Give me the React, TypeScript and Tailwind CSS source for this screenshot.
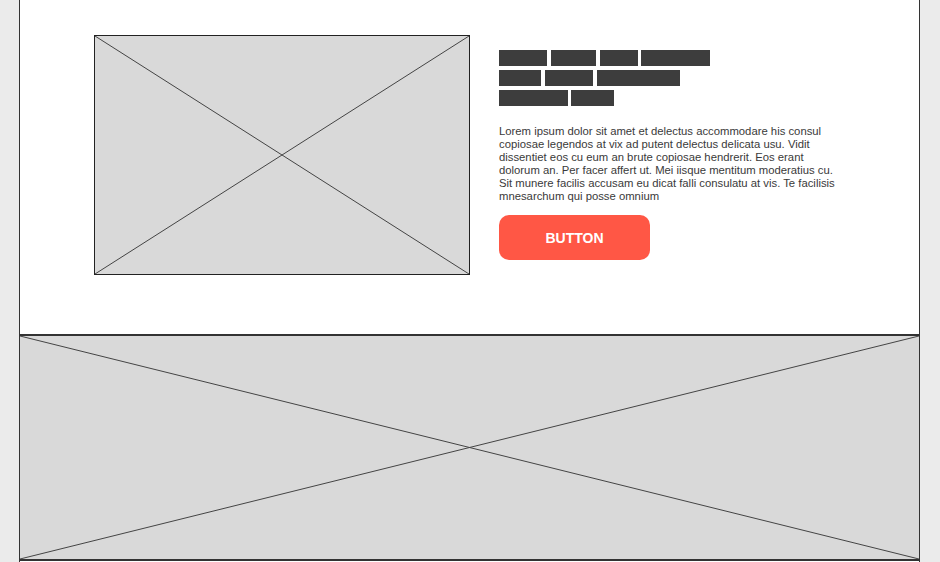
const Placeholder = ({ className }: { className: string }) => (
  <div className={`relative bg-[#d9d9d9] ${className}`}>
    <svg className="absolute inset-0 w-full h-full" viewBox="0 0 100 100" preserveAspectRatio="none">
      <line x1="0" y1="0" x2="100" y2="100" stroke="#444" strokeWidth="1" vectorEffect="non-scaling-stroke" />
      <line x1="100" y1="0" x2="0" y2="100" stroke="#444" strokeWidth="1" vectorEffect="non-scaling-stroke" />
    </svg>
  </div>
);

// [width, gap before]
const rows: [number, number][][] = [
  [[48, 0], [45, 4], [38, 4], [69, 3]],
  [[42, 0], [48, 4], [83, 4]],
  [[69, 0], [43, 3]],
];

export default function App() {
  return (
    <div className="w-[940px] h-[562px] bg-[#ebebeb] overflow-hidden" style={{ fontFamily: '"Liberation Sans", Arial, sans-serif' }}>
      <div className="ml-[19px] w-[901px] h-full border-x border-[#333] bg-white flex flex-col">
        {/* Top section */}
        <div className="h-[334px] flex pt-[35px] pl-[74px]">
          <Placeholder className="w-[376px] h-[240px] border border-[#222]" />
          <div className="ml-[29px] pt-[15px] w-[345px]">
            <div className="flex flex-col gap-[4px]">
              {rows.map((row, i) => (
                <div key={i} className="flex">
                  {row.map(([w, g], j) => (
                    <div key={j} className="h-[16px] bg-[#3d3d3d]" style={{ width: w, marginLeft: g }} />
                  ))}
                </div>
              ))}
            </div>
            <p className="mt-[19px] text-[11.3px] leading-[13px] text-[#3a3a3a]">
              Lorem ipsum dolor sit amet et delectus accommodare his consul copiosae legendos at vix ad putent delectus delicata usu. Vidit dissentiet eos cu eum an brute copiosae hendrerit. Eos erant dolorum an. Per facer affert ut. Mei iisque mentitum moderatius cu. Sit munere facilis accusam eu dicat falli consulatu at vis. Te facilisis mnesarchum qui posse omnium
            </p>
            <button className="mt-[12px] w-[151px] h-[45px] rounded-[10px] bg-[#ff5745] text-white font-bold text-[14px] flex items-center justify-center pt-[1px]">
              BUTTON
            </button>
          </div>
        </div>
        {/* Banner image */}
        <Placeholder className="h-[227px] border-y-2 border-[#333]" />
      </div>
    </div>
  );
}
